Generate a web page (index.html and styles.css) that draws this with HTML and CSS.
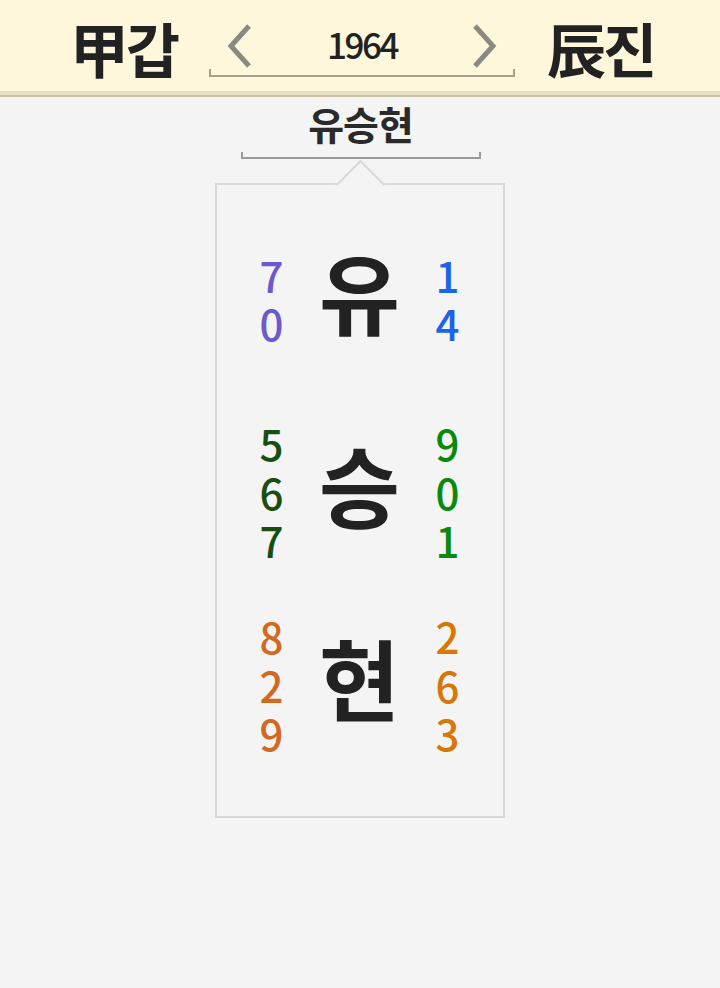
FILE: index.html
```html
<!DOCTYPE html>
<html lang="ko">
<head>
<meta charset="utf-8">
<link rel="stylesheet" href="styles.css">
</head>
<body>
<header class="top">
  <div class="gz">甲갑</div>
  <div class="year-box">
    <svg class="arrow" width="26" height="44" viewBox="0 0 26 44"><polyline points="22,2 4,22 22,42" fill="none" stroke="#8a8a82" stroke-width="5"/></svg>
    <div class="year">1964</div>
    <svg class="arrow" width="26" height="44" viewBox="0 0 26 44"><polyline points="4,2 22,22 4,42" fill="none" stroke="#8a8a82" stroke-width="5"/></svg>
  </div>
  <div class="gz">辰진</div>
</header>
<main class="main">
  <div class="name">유승현</div>
  <div class="name-bracket"></div>
  <div class="card">
    <div class="row">
      <div class="nums c1l"><span>7</span><span>0</span></div>
      <div class="ch">유</div>
      <div class="nums c1r"><span>1</span><span>4</span></div>
    </div>
    <div class="row">
      <div class="nums c2l"><span>5</span><span>6</span><span>7</span></div>
      <div class="ch">승</div>
      <div class="nums c2r"><span>9</span><span>0</span><span>1</span></div>
    </div>
    <div class="row">
      <div class="nums c3l"><span>8</span><span>2</span><span>9</span></div>
      <div class="ch">현</div>
      <div class="nums c3r"><span>2</span><span>6</span><span>3</span></div>
    </div>
  </div>
</main>
</body>
</html>
```
FILE: styles.css
```css
* { box-sizing: border-box; }
html, body { margin: 0; padding: 0; }
body {
  background: #f4f4f4;
  font-family: "Noto Sans CJK KR", "Noto Sans", sans-serif;
  color: #222;
  width: 720px;
  height: 988px;
  overflow: hidden;
}
.top {
  height: 95px;
  background: #fef7dc;
  border-bottom: 4px solid #e8e0c4;
  box-shadow: 0 2px 0 #c9c2a9;
  display: flex;
  align-items: flex-start;
  justify-content: center;
  gap: 32px;
  padding-left: 4px;
}
.gz {
  font-size: 59px;
  font-weight: 700;
  line-height: 1;
  margin-top: 18px;
  letter-spacing: -3px;
  color: #222;
}
.year-box {
  width: 306px;
  height: 8px;
  margin-top: 69px;
  border: 2px solid #a4a08c;
  border-top: none;
  position: relative;
}
.year-box .arrow {
  position: absolute;
  top: -45px;
}
.year-box .arrow:first-child { left: 16px; }
.year-box .arrow:last-child { right: 16px; }
.year {
  position: absolute;
  top: -48px;
  left: 0;
  right: 0;
  text-align: center;
  font-size: 35px;
  font-weight: 500;
  letter-spacing: -2.5px;
  line-height: 1.3;
  color: #222;
}
.main {
  display: flex;
  flex-direction: column;
  align-items: center;
  padding-left: 1px;
}
.name {
  margin-top: 1px;
  font-size: 39px;
  font-weight: 700;
  line-height: 1.4;
  color: #2a2a2a;
  letter-spacing: -1px;
}
.name-bracket {
  width: 240px;
  height: 7px;
  margin-top: 1px;
  border: 2px solid #9a9a9a;
  border-top: none;
}
.card {
  position: relative;
  margin-top: 24px;
  margin-left: -2px;
  width: 290px;
  height: 635px;
  border: 2px solid #d8d8d8;
  padding-top: 18px;
  display: flex;
  flex-direction: column;
}
.card::before {
  content: "";
  position: absolute;
  top: -18px;
  left: 50%;
  width: 33px;
  height: 33px;
  margin-left: -17px;
  background: #f4f4f4;
  border-top: 2px solid #d8d8d8;
  border-left: 2px solid #d8d8d8;
  transform: rotate(45deg);
}
.row {
  height: 193px;
  display: flex;
  align-items: center;
  justify-content: center;
  gap: 20px;
}
.ch {
  width: 96px;
  text-align: center;
  font-size: 88px;
  font-weight: 700;
  line-height: 1;
  padding-bottom: 18px;
  color: #222;
}
.nums {
  width: 40px;
  display: flex;
  flex-direction: column;
  align-items: center;
  font-size: 42px;
  line-height: 48.5px;
  font-weight: 500;
}
.c1l { color: #6a5acd; }
.c1r { color: #1c64e6; }
.c2l { color: #174f12; }
.c2r { color: #0a8a0a; }
.c3l { color: #d2691e; }
.c3r { color: #d97706; }
```
